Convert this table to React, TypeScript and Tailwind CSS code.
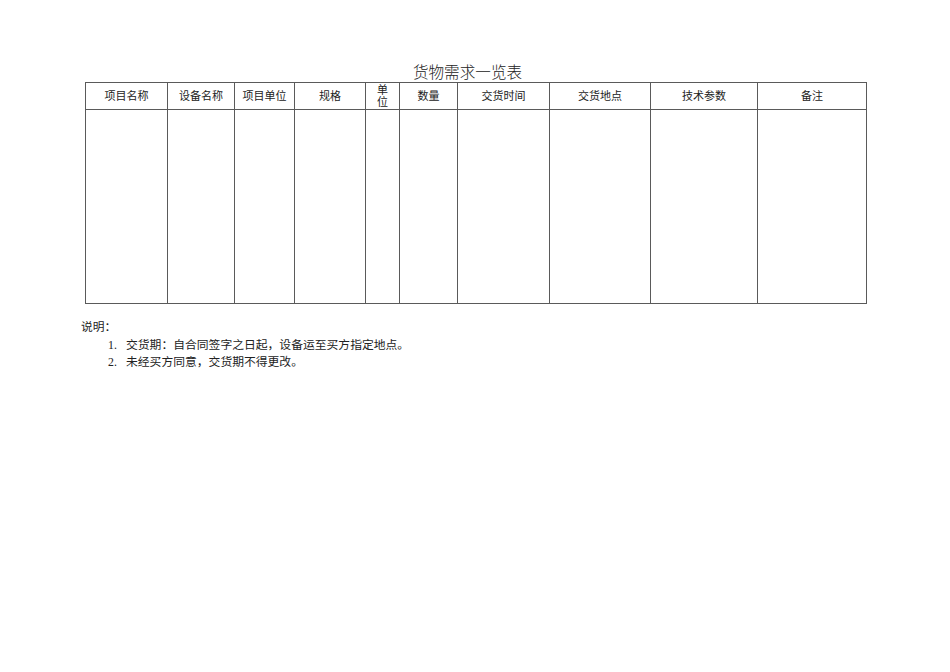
import React from 'react';

const columns = [
  { label: '项目名称', width: 'w-[82px]' },
  { label: '设备名称', width: 'w-[67px]' },
  { label: '项目单位', width: 'w-[60px]' },
  { label: '规格', width: 'w-[71px]' },
  { label: '单位', width: 'w-[34px]', stacked: true },
  { label: '数量', width: 'w-[58px]' },
  { label: '交货时间', width: 'w-[92px]' },
  { label: '交货地点', width: 'w-[101px]' },
  { label: '技术参数', width: 'w-[107px]' },
  { label: '备注', width: 'w-[109px]' },
];

const notes = [
  '交货期：自合同签字之日起，设备运至买方指定地点。',
  '未经买方同意，交货期不得更改。',
];

const sans = "font-['Liberation_Sans','Noto_Sans_CJK_SC',sans-serif]";
const serif = "font-['Liberation_Serif','Noto_Sans_CJK_SC',serif]";

export default function App() {
  return (
    <div className="w-[950px] h-[672px] bg-white text-black">
      <div className="pl-[85px] pt-[64px]">
        {/* Title */}
        <h1 className={`${serif} w-[782px] pr-[17px] text-center text-[15.6px] leading-[18px] font-light text-[#222]`}>
          货物需求一览表
        </h1>

        {/* Table */}
        <table className={`${sans} w-[782px] table-fixed border-collapse text-[11px] text-[#222]`}>
          <colgroup>
            {columns.map((c) => (
              <col key={c.label} className={c.width} />
            ))}
          </colgroup>
          <thead>
            <tr className="h-[27px]">
              {columns.map((c) => (
                <th
                  key={c.label}
                  className="border border-[#5a5a5a] p-0 text-center align-middle font-normal leading-[12px]"
                >
                  {c.stacked ? (
                    <span className="flex flex-col items-center">
                      <span>单</span>
                      <span>位</span>
                    </span>
                  ) : (
                    c.label
                  )}
                </th>
              ))}
            </tr>
          </thead>
          <tbody>
            <tr className="h-[194px]">
              {columns.map((c) => (
                <td key={c.label} className="border border-[#5a5a5a] p-0" />
              ))}
            </tr>
          </tbody>
        </table>
      </div>

      {/* Notes */}
      <div className={`${serif} pl-[81px] pt-[15px] text-[11.8px] leading-[17.5px] text-[#222]`}>
        <p>说明：</p>
        {notes.map((n, i) => (
          <p key={n} className="flex pl-[27px]">
            <span className="w-[18px]">{i + 1}.</span>
            <span>{n}</span>
          </p>
        ))}
      </div>
    </div>
  );
}
